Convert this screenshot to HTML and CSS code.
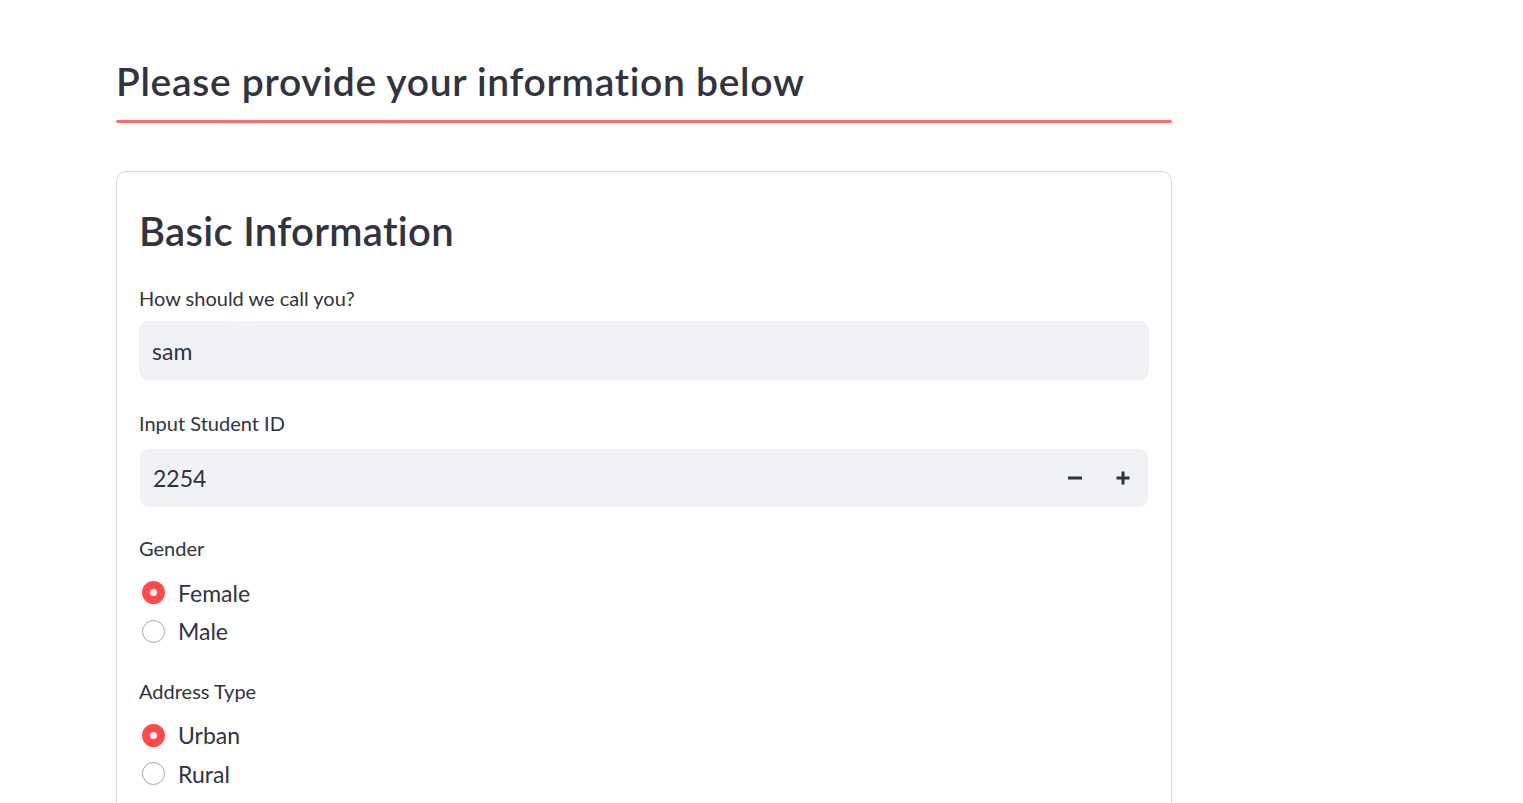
FILE: index.html
```html
<!DOCTYPE html>
<html lang="en">
<head>
<meta charset="utf-8">
<title>Student Information</title>
<link rel="stylesheet" href="styles.css">
</head>
<body>
<main class="page">
  <h2 class="title">Please provide your information below</h2>
  <div class="divider"></div>
  <form class="form">
    <h2 class="section-title">Basic Information</h2>

    <div class="field text-field">
      <label class="label">How should we call you?</label>
      <div class="input"><span class="value">sam</span></div>
    </div>

    <div class="field number-field">
      <label class="label">Input Student ID</label>
      <div class="input number">
        <span class="value">2254</span>
        <div class="steppers">
          <span class="step">
            <svg width="14" height="14" viewBox="0 0 14 14"><rect x="0" y="5.5" width="14" height="3" fill="#31333f"/></svg>
          </span>
          <span class="step">
            <svg width="14" height="14" viewBox="0 0 14 14"><rect x="0.5" y="5.5" width="13" height="3" fill="#31333f"/><rect x="5.5" y="0.5" width="3" height="13" fill="#31333f"/></svg>
          </span>
        </div>
      </div>
    </div>

    <div class="field radios-field">
      <label class="label">Gender</label>
      <div class="radio-group">
        <div class="radio"><span class="dot checked"></span><span class="radio-text">Female</span></div>
        <div class="radio"><span class="dot"></span><span class="radio-text">Male</span></div>
      </div>
    </div>

    <div class="field radios-field">
      <label class="label">Address Type</label>
      <div class="radio-group">
        <div class="radio"><span class="dot checked"></span><span class="radio-text">Urban</span></div>
        <div class="radio"><span class="dot"></span><span class="radio-text">Rural</span></div>
      </div>
    </div>
  </form>
</main>
</body>
</html>
```

FILE: styles.css
```css
* { box-sizing: border-box; }

html, body {
  margin: 0;
  background: #ffffff;
  color: #31333f;
  font-family: "Lato", "Noto Sans", sans-serif;
}

.page {
  width: 1056px;
  margin-left: 116px;
  padding-top: 58px;
}

.title {
  margin: 0;
  font-size: 39px;
  line-height: 47px;
  font-weight: 600;
  letter-spacing: 0.7px;
}

.divider {
  margin-top: 15px;
  height: 3px;
  border-radius: 2px;
  background: #ff6c6c;
}

.form {
  margin-top: 48px;
  border: 1px solid rgba(49, 51, 63, 0.2);
  border-radius: 10px;
  padding: 22px 22px 40px 22px;
  display: flex;
  flex-direction: column;
}

.section-title {
  margin: 0;
  padding-top: 14px;
  font-size: 40px;
  line-height: 46px;
  font-weight: 600;
  letter-spacing: 0.3px;
}

.field {
  display: flex;
  flex-direction: column;
}

.section-title + .field { margin-top: 30px; }
.text-field + .number-field { margin-top: 29px; }
.number-field + .radios-field { margin-top: 27px; }
.radios-field + .radios-field { margin-top: 26px; }

.label {
  font-size: 20px;
  line-height: 28px;
}

.input {
  margin-top: 9px;
  height: 59px;
  background: #f0f2f6;
  border-radius: 9px;
  display: flex;
  align-items: center;
  padding-left: 13px;
  font-size: 23px;
}

.input.number {
  margin-top: 12px;
  margin-left: 1px;
  margin-right: 1px;
  height: 58px;
  padding-right: 18px;
}

.value { flex: 1; }

.steppers {
  display: flex;
  gap: 34px;
  align-items: center;
}

.step {
  display: flex;
  width: 14px;
  height: 14px;
}

.radio-group {
  margin-top: 11px;
  display: flex;
  flex-direction: column;
}

.radio {
  height: 39px;
  display: flex;
  align-items: center;
  padding-left: 3px;
}

.radio + .radio { margin-top: -0.5px; }

.dot {
  width: 23px;
  height: 23px;
  border-radius: 50%;
  border: 1.5px solid #a8a8ad;
  background: #ffffff;
  flex: none;
}

.dot.checked {
  border: 8px solid #ff4b4b;
  background: #f0f2f6;
}

.radio-text {
  margin-left: 13px;
  font-size: 23px;
}
```
